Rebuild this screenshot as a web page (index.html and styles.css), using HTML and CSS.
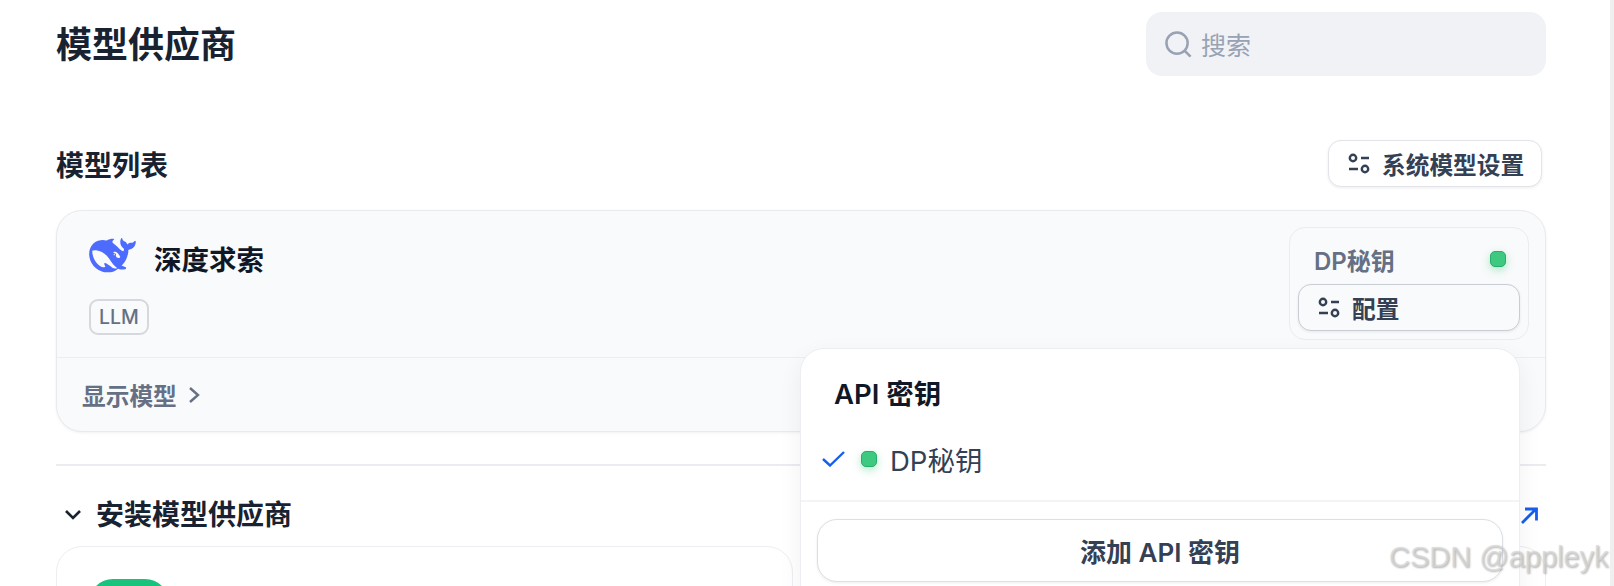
FILE: index.html
```html
<!DOCTYPE html>
<html lang="zh-CN">
<head>
    <meta charset="UTF-8">
    <title>模型供应商</title>
    <link rel="stylesheet" href="styles.css">
</head>
<body>
    <svg class="icon-defs" width="0" height="0">
        <symbol id="sliders" viewBox="0 0 22 22">
            <circle cx="5" cy="5" r="3.2"/>
            <path d="M13 5h8M1 16h9"/>
            <circle cx="17" cy="16" r="3.2"/>
        </symbol>
    </svg>

    <div class="page">
        <header class="top-bar">
            <h1>模型供应商</h1>
            <div class="search">
                <svg class="search-icon" viewBox="0 0 28 28"><circle cx="12.5" cy="12.5" r="11"/><path d="M20.5 20.5l6 6"/></svg>
                <span>搜索</span>
            </div>
        </header>

        <div class="section-head">
            <h2>模型列表</h2>
            <button class="btn btn-system"><svg class="sliders"><use href="#sliders"/></svg>系统模型设置</button>
        </div>

        <section class="provider-card">
            <div class="provider-top">
                <div class="provider-info">
                    <div class="provider-name">
                        <svg class="whale" viewBox="0 0 24 18" preserveAspectRatio="xMidYMid meet"><path transform="translate(0 -3)" d="M23.748 4.482c-.254-.124-.364.113-.512.234-.051.039-.094.09-.137.136-.372.397-.806.657-1.373.626-.829-.046-1.537.214-2.163.848-.133-.782-.575-1.248-1.247-1.548-.352-.156-.708-.311-.955-.65-.172-.241-.219-.51-.305-.774-.055-.16-.11-.323-.293-.35-.2-.031-.278.136-.356.276-.313.572-.434 1.202-.422 1.84.027 1.436.633 2.58 1.838 3.393.137.093.172.187.129.323-.082.28-.18.552-.266.833-.055.179-.137.217-.329.14a5.526 5.526 0 01-1.736-1.18c-.857-.828-1.631-1.742-2.597-2.458a11.365 11.365 0 00-.689-.471c-.985-.957.13-1.743.388-1.836.27-.098.093-.432-.779-.428-.872.004-1.67.295-2.687.684a3.055 3.055 0 01-.465.137 9.597 9.597 0 00-2.883-.102c-1.885.21-3.39 1.102-4.497 2.623C.082 8.606-.231 10.684.152 12.85c.403 2.284 1.569 4.175 3.36 5.653 1.858 1.533 3.997 2.284 6.438 2.14 1.482-.085 3.133-.284 4.994-1.86.47.234.962.327 1.78.397.63.059 1.236-.03 1.705-.128.735-.156.684-.837.419-.961-2.155-1.004-1.682-.595-2.113-.926 1.096-1.296 2.746-2.642 3.392-7.003.05-.347.007-.565 0-.845-.004-.17.035-.237.23-.256a4.173 4.173 0 001.545-.475c1.396-.763 1.96-2.015 2.093-3.517.02-.23-.004-.467-.247-.588zM11.581 18c-2.089-1.642-3.102-2.183-3.52-2.16-.392.024-.321.471-.235.763.09.288.207.486.371.739.114.167.192.416-.113.603-.673.416-1.842-.14-1.897-.167-1.361-.802-2.5-1.86-3.301-3.307-.774-1.393-1.224-2.887-1.298-4.482-.02-.386.093-.522.477-.592a4.696 4.696 0 011.529-.039c2.132.312 3.946 1.265 5.468 2.774.868.86 1.525 1.887 2.202 2.891.72 1.066 1.494 2.082 2.48 2.914.348.292.625.514.891.677-.802.09-2.14.11-3.054-.614zm1-6.44a.306.306 0 01.415-.287.302.302 0 01.2.288.306.306 0 01-.31.307.303.303 0 01-.304-.308zm3.11 1.596c-.2.081-.399.151-.59.16a1.245 1.245 0 01-.798-.254c-.274-.23-.47-.358-.552-.758a1.73 1.73 0 01.016-.588c.07-.327-.008-.537-.239-.727-.187-.156-.426-.199-.688-.199a.559.559 0 01-.254-.078c-.11-.054-.2-.19-.114-.358.028-.054.16-.186.192-.21.356-.202.767-.136 1.146.016.352.144.618.408 1.001.782.391.451.462.576.685.914.176.265.336.537.445.848.067.195-.019.354-.25.452z"/></svg>
                        <span>深度求索</span>
                    </div>
                    <span class="tag">LLM</span>
                </div>
                <div class="key-box">
                    <div class="key-row">
                        <span>DP秘钥</span>
                        <i class="status-dot"></i>
                    </div>
                    <button class="btn btn-config"><svg class="sliders"><use href="#sliders"/></svg>配置</button>
                </div>
            </div>
            <div class="provider-foot">
                <span>显示模型</span>
                <svg class="chevron-right" viewBox="0 0 12 18"><path d="M2 2l8 7-8 7"/></svg>
            </div>
        </section>

        <hr class="divider">

        <div class="install-head">
            <div class="install-title">
                <svg class="chevron-down" viewBox="0 0 18 12"><path d="M2 2l7 7 7-7"/></svg>
                <h2>安装模型供应商</h2>
            </div>
            <svg class="arrow-link" viewBox="0 0 17 17"><path d="M1 16L15 2M4 2h11.5v11.5"/></svg>
        </div>

        <div class="install-grid">
            <div class="install-card"><div class="install-logo"></div></div>
            <div class="install-card"></div>
        </div>

        <div class="popover">
            <div class="popover-title">API 密钥</div>
            <div class="popover-item">
                <svg class="check" viewBox="0 0 23 16"><path d="M1 8l7 6.5L22 1"/></svg>
                <i class="status-dot"></i>
                <span>DP秘钥</span>
            </div>
            <div class="popover-foot">
                <button class="btn btn-add">添加 API 密钥</button>
            </div>
        </div>

        <div class="watermark">CSDN @appleyk</div>
    </div>
    <div class="scroll-edge"></div>
</body>
</html>
```

FILE: styles.css
```css
/* 全局 */
html, body {
    margin: 0;
    height: 100%;
}
body {
    display: flex;
    overflow: hidden;
    background: #fff;
    color: #101828;
    font-family: Inter, "Noto Sans CJK SC", sans-serif;
}
h1, h2 {
    margin: 0;
}
.icon-defs {
    position: absolute;
}
.page {
    position: relative;
    flex: 1;
    min-width: 0;
    height: 586px;
    overflow: hidden;
    padding: 12px 64px 0 56px;
    box-sizing: border-box;
}
.scroll-edge {
    width: 4px;
    background: #efefef;
}

/* 顶部 */
.top-bar {
    display: flex;
    justify-content: space-between;
    align-items: center;
    height: 64px;
}
.top-bar h1 {
    padding-top: 3px;
    font-size: 36px;
    line-height: 61px;
    font-weight: 600;
    color: #182230;
}
.search {
    display: flex;
    align-items: center;
    gap: 9px;
    width: 400px;
    height: 64px;
    box-sizing: border-box;
    padding-left: 19px;
    border-radius: 16px;
    background: #f0f2f6;
    color: #98a2b3;
    font-size: 25px;
}
.search-icon {
    width: 27px;
    height: 27px;
    fill: none;
    stroke: #98a2b3;
    stroke-width: 2.6;
}

/* 模型列表 */
.section-head {
    display: flex;
    justify-content: space-between;
    align-items: center;
    margin-top: 64px;
    padding-right: 4px;
}
.section-head h2 {
    font-size: 28px;
    font-weight: 600;
    color: #182230;
}
.btn {
    display: flex;
    align-items: center;
    box-sizing: border-box;
    background: #fff;
    border: 1px solid #e2e4e9;
    border-radius: 13px;
    box-shadow: 0 1px 3px rgba(16, 24, 40, 0.08);
    color: #344054;
    font-family: inherit;
    font-size: 23.7px;
    font-weight: 600;
}
.btn-system {
    gap: 12px;
    width: 214px;
    height: 47px;
    padding: 0 0 0 19px;
}
.sliders {
    width: 22px;
    height: 22px;
    fill: none;
    stroke: #344054;
    stroke-width: 2.4;
}

.provider-card {
    margin-top: 23px;
    border: 1px solid #e8eaee;
    border-radius: 26px;
    background: #f9fafb;
    box-shadow: 0 1px 3px rgba(16, 24, 40, 0.06);
}
.provider-top {
    display: flex;
    justify-content: space-between;
    padding: 16px 16px 17px 32px;
}
.provider-name {
    display: flex;
    align-items: flex-start;
    gap: 18px;
    margin-top: 15px;
    font-size: 27.5px;
    font-weight: 600;
    line-height: 36px;
}
.whale {
    width: 47px;
    height: 35px;
    margin-top: -4px;
    fill: #4d6bfe;
}
.tag {
    display: block;
    width: fit-content;
    margin-top: 21px;
    padding: 0 8px;
    height: 36px;
    box-sizing: border-box;
    border: 2px solid #d5d8dd;
    border-radius: 9px;
    color: #667085;
    font-size: 19.5px;
    font-weight: 500;
    line-height: 32px;
}
.key-box {
    width: 240px;
    height: 113px;
    box-sizing: border-box;
    padding: 0 8px;
    border: 1px solid #eaecf0;
    border-radius: 16px;
}
.key-row {
    display: flex;
    justify-content: space-between;
    align-items: center;
    height: 50px;
    padding: 6px 14px 0 16px;
    color: #667085;
    font-size: 24px;
    font-weight: 600;
}
.status-dot {
    display: block;
    width: 16px;
    height: 16px;
    box-sizing: border-box;
    border: 1px solid #27ae69;
    border-radius: 5px;
    background: #3ec981;
    box-shadow: 0 3px 9px rgba(60, 200, 128, 0.4);
}
.btn-config {
    gap: 12px;
    width: 100%;
    height: 47px;
    padding: 0 0 0 19px;
    background: #f9fafb;
    border-color: #c9ccd3;
}
.provider-foot {
    display: flex;
    align-items: center;
    gap: 11px;
    height: 73px;
    padding-left: 25px;
    border-top: 1px solid #eceef1;
    color: #667085;
    font-size: 23.7px;
    font-weight: 600;
}
.chevron-right {
    width: 12px;
    height: 18px;
    fill: none;
    stroke: #667085;
    stroke-width: 2.4;
}

/* 安装模型供应商 */
.divider {
    margin: 32px 0 0;
    border: 0;
    border-top: 2px solid #ececf0;
}
.install-head {
    display: flex;
    justify-content: space-between;
    align-items: center;
    height: 32px;
    padding: 33px 8px 15px 8px;
}
.install-title {
    display: flex;
    align-items: center;
    gap: 14px;
}
.install-title h2 {
    font-size: 28px;
    font-weight: 600;
    line-height: 32px;
    color: #182230;
}
.chevron-down {
    width: 18px;
    height: 12px;
    fill: none;
    stroke: #182230;
    stroke-width: 2.6;
}
.arrow-link {
    width: 17px;
    height: 17px;
    fill: none;
    stroke: #155eef;
    stroke-width: 2.8;
}
.install-grid {
    display: grid;
    grid-template-columns: 1fr 1fr;
    gap: 16px;
}
.install-card {
    height: 200px;
    box-sizing: border-box;
    padding: 32px;
    border: 1px solid #eceef1;
    border-radius: 26px;
}
.install-logo {
    width: 80px;
    height: 80px;
    border-radius: 24px;
    background: #18c47c;
}

/* 弹出层 */
.popover {
    position: absolute;
    left: 800px;
    top: 348px;
    width: 720px;
    height: 260px;
    box-sizing: border-box;
    padding-top: 27px;
    border: 1px solid #eceef1;
    border-radius: 24px;
    background: #fff;
    box-shadow: 0 8px 24px rgba(16, 24, 40, 0.06);
}
.popover-title {
    padding-left: 33px;
    font-size: 27.5px;
    font-weight: 600;
    line-height: 36px;
}
.popover-item {
    display: flex;
    align-items: center;
    margin-top: 27px;
    height: 40px;
    padding: 0 0 0 21px;
    color: #344054;
    font-size: 27.5px;
}
.check {
    width: 23px;
    height: 16px;
    margin-right: 16px;
    fill: none;
    stroke: #155eef;
    stroke-width: 2.4;
}
.popover-item .status-dot {
    margin-right: 13px;
}
.popover-foot {
    margin-top: 21px;
    padding: 17px 16px 0;
    border-top: 2px solid #f2f4f7;
}
.btn-add {
    justify-content: center;
    width: 100%;
    height: 63px;
    border-color: #dcdfe4;
    border-radius: 20px;
    font-size: 26px;
}

.watermark {
    position: absolute;
    left: 1389px;
    top: 539px;
    color: rgba(215, 215, 215, 0.7);
    font-family: "Liberation Sans", Arial, sans-serif;
    font-size: 29px;
    line-height: 36px;
    white-space: nowrap;
    text-shadow: 1px 1px 2px rgba(0, 0, 0, 0.3);
}
```
